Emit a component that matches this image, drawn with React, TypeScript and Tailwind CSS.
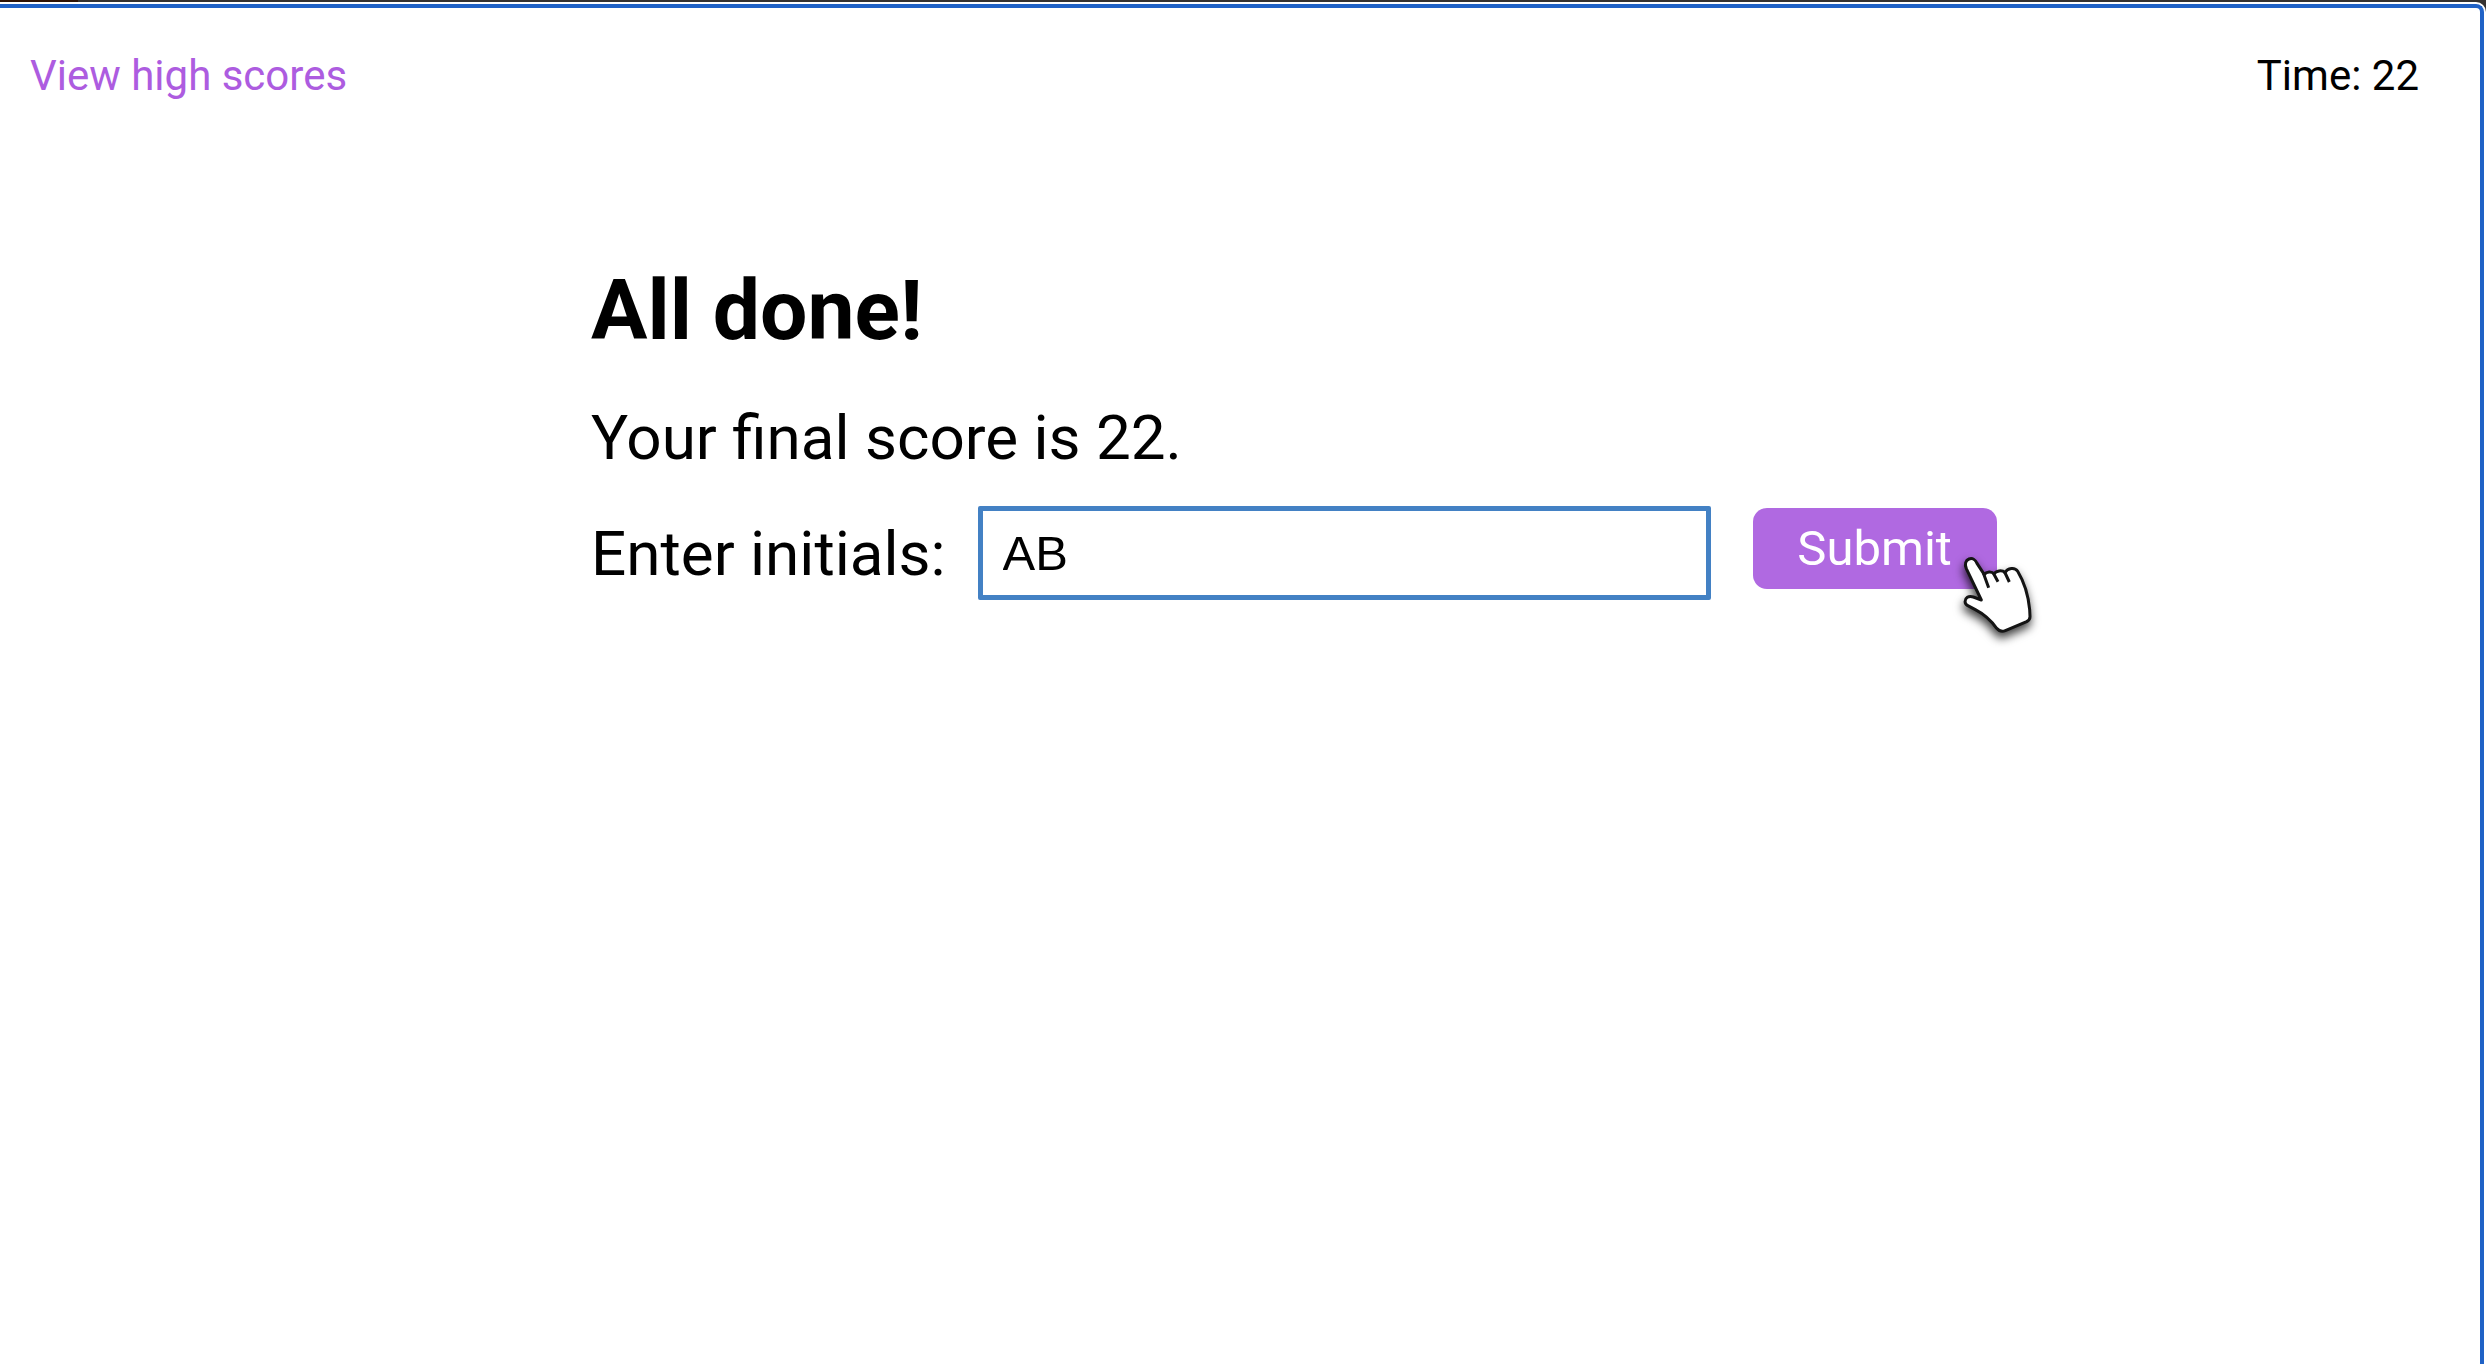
import { useState } from "react";

function HandCursor() {
  return (
    <svg
      viewBox="0 0 330 330"
      aria-hidden="true"
      className="pointer-events-none absolute -right-[53px] top-[34px] size-[110px] overflow-visible"
    >
      <defs>
        <filter
          id="hand-shadow"
          x="-30%"
          y="-30%"
          width="160%"
          height="160%"
          colorInterpolationFilters="sRGB"
        >
          <feDropShadow dx="-2" dy="16" stdDeviation="15" floodColor="#000" floodOpacity="0.75" />
        </filter>
      </defs>
      <path
        d="M124 180 L79 86 C73 72 77 61 87 57 C98 53 107 60 111 70 L133 104 C139 95 155 93 162 102 C168 92 186 89 195 98 C203 83 225 81 233 94 C250 122 264 157 269 209 L270 230 C270 237 267 241 260 245 L196 272 C184 277 176 272 170 265 C152 240 135 224 106 209 L82 196 C73 191 73 178 82 172 C88 168 94 169 100 171 Z"
        fill="#fff"
        stroke="#141414"
        strokeWidth="9"
        strokeLinejoin="round"
        filter="url(#hand-shadow)"
      />
      <path
        d="M130 99 L146 143 M161 101 L174 125 M194 96 L208 126"
        fill="none"
        stroke="#141414"
        strokeWidth="9"
      />
    </svg>
  );
}

export default function App() {
  const [initials, setInitials] = useState("AB");

  return (
    <div className="flex min-h-screen flex-col bg-[#353230] font-[Roboto,sans-serif] text-black">
      <div className="h-0.5 w-[78px] bg-[#2e1204]" />
      <div className="flex grow flex-col rounded-tr-[10px] bg-white pt-0.5 pr-0.5">
        <div className="grow rounded-tr-lg border-t-4 border-r-4 border-[#2062c6]">
          <header className="flex items-center justify-between pt-11 pr-[61px] pl-[30px] text-[42px] leading-[48px]">
            <a href="#scores" className="text-[#ad5ce0]">
              View high scores
            </a>
            <div>Time: 22</div>
          </header>
          <main className="mt-[163px] pl-[591px]">
            <h1 className="text-[84px] leading-[96px] font-bold">All done!</h1>
            <p className="mt-[43px] text-[62px] leading-[72px]">Your final score is 22.</p>
            <form className="mt-8 flex items-start" onSubmit={(e) => e.preventDefault()}>
              <label htmlFor="initials" className="py-3 text-[62px] leading-[72px]">
                Enter initials:
              </label>
              <input
                id="initials"
                type="text"
                value={initials}
                onChange={(e) => setInitials(e.target.value)}
                className="ml-8 h-[94px] w-[733px] rounded-xs border-[5px] border-[#4381c4] px-5 font-['Liberation_Sans',sans-serif] text-[49px] outline-none"
              />
              <div className="relative ml-[42px] pt-0.5">
                <button
                  type="submit"
                  className="block h-[81px] w-[244px] rounded-[14px] bg-[#b069e1] text-[49px] leading-[56px] text-white"
                >
                  Submit
                </button>
                <HandCursor />
              </div>
            </form>
          </main>
        </div>
      </div>
    </div>
  );
}
